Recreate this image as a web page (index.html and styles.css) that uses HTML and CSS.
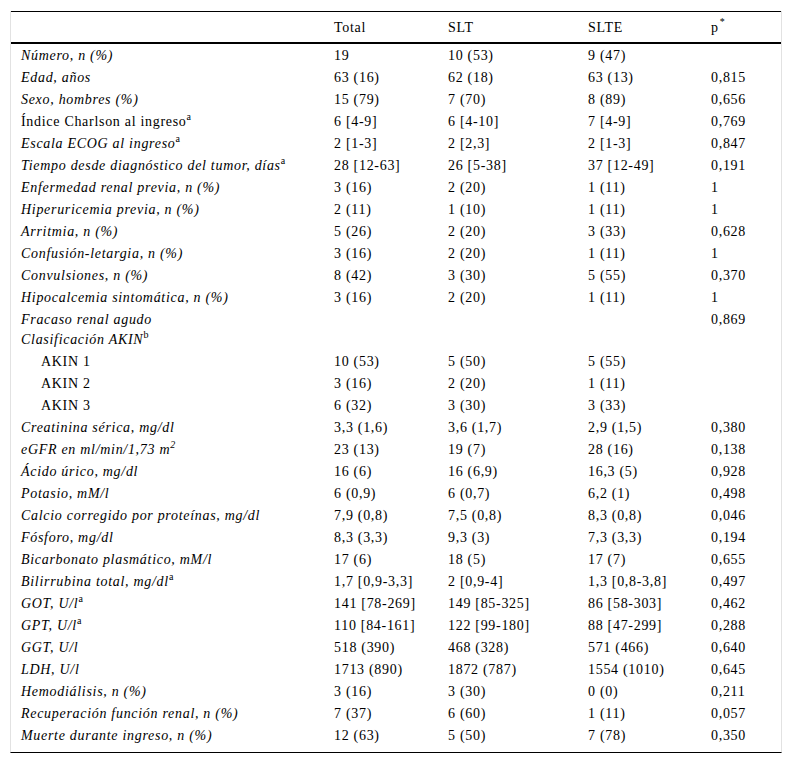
FILE: index.html
```html
<!DOCTYPE html>
<html lang="es">
<head>
<meta charset="utf-8">
<link rel="stylesheet" href="styles.css">
</head>
<body>
<div class="frame">
<table class="data">
<colgroup>
<col class="c1"><col class="c2"><col class="c3"><col class="c4"><col class="c5">
</colgroup>
<thead>
<tr><th></th><th>Total</th><th>SLT</th><th>SLTE</th><th>p<sup class="ast">*</sup></th></tr>
</thead>
<tbody>
<tr><td class="it">Número, n (%)</td><td>19</td><td>10 (53)</td><td>9 (47)</td><td></td></tr>
<tr><td class="it">Edad, años</td><td>63 (16)</td><td>62 (18)</td><td>63 (13)</td><td>0,815</td></tr>
<tr><td class="it">Sexo, hombres (%)</td><td>15 (79)</td><td>7 (70)</td><td>8 (89)</td><td>0,656</td></tr>
<tr><td>Índice Charlson al ingreso<sup>a</sup></td><td>6 [4-9]</td><td>6 [4-10]</td><td>7 [4-9]</td><td>0,769</td></tr>
<tr><td class="it">Escala ECOG al ingreso<sup>a</sup></td><td>2 [1-3]</td><td>2 [2,3]</td><td>2 [1-3]</td><td>0,847</td></tr>
<tr><td class="it">Tiempo desde diagnóstico del tumor, días<sup>a</sup></td><td>28 [12-63]</td><td>26 [5-38]</td><td>37 [12-49]</td><td>0,191</td></tr>
<tr><td class="it">Enfermedad renal previa, n (%)</td><td>3 (16)</td><td>2 (20)</td><td>1 (11)</td><td>1</td></tr>
<tr><td class="it">Hiperuricemia previa, n (%)</td><td>2 (11)</td><td>1 (10)</td><td>1 (11)</td><td>1</td></tr>
<tr><td class="it">Arritmia, n (%)</td><td>5 (26)</td><td>2 (20)</td><td>3 (33)</td><td>0,628</td></tr>
<tr><td class="it">Confusión-letargia, n (%)</td><td>3 (16)</td><td>2 (20)</td><td>1 (11)</td><td>1</td></tr>
<tr><td class="it">Convulsiones, n (%)</td><td>8 (42)</td><td>3 (30)</td><td>5 (55)</td><td>0,370</td></tr>
<tr><td class="it">Hipocalcemia sintomática, n (%)</td><td>3 (16)</td><td>2 (20)</td><td>1 (11)</td><td>1</td></tr>
<tr class="top"><td class="it">Fracaso renal agudo<br>Clasificación AKIN<sup>b</sup></td><td></td><td></td><td></td><td>0,869</td></tr>
<tr><td class="sub">AKIN 1</td><td>10 (53)</td><td>5 (50)</td><td>5 (55)</td><td></td></tr>
<tr><td class="sub">AKIN 2</td><td>3 (16)</td><td>2 (20)</td><td>1 (11)</td><td></td></tr>
<tr><td class="sub">AKIN 3</td><td>6 (32)</td><td>3 (30)</td><td>3 (33)</td><td></td></tr>
<tr><td class="it">Creatinina sérica, mg/dl</td><td>3,3 (1,6)</td><td>3,6 (1,7)</td><td>2,9 (1,5)</td><td>0,380</td></tr>
<tr><td class="it">eGFR en ml/min/1,73 m<sup class="sq">2</sup></td><td>23 (13)</td><td>19 (7)</td><td>28 (16)</td><td>0,138</td></tr>
<tr><td class="it">Ácido úrico, mg/dl</td><td>16 (6)</td><td>16 (6,9)</td><td>16,3 (5)</td><td>0,928</td></tr>
<tr><td class="it">Potasio, mM/l</td><td>6 (0,9)</td><td>6 (0,7)</td><td>6,2 (1)</td><td>0,498</td></tr>
<tr><td class="it">Calcio corregido por proteínas, mg/dl</td><td>7,9 (0,8)</td><td>7,5 (0,8)</td><td>8,3 (0,8)</td><td>0,046</td></tr>
<tr><td class="it">Fósforo, mg/dl</td><td>8,3 (3,3)</td><td>9,3 (3)</td><td>7,3 (3,3)</td><td>0,194</td></tr>
<tr><td class="it">Bicarbonato plasmático, mM/l</td><td>17 (6)</td><td>18 (5)</td><td>17 (7)</td><td>0,655</td></tr>
<tr><td class="it">Bilirrubina total, mg/dl<sup>a</sup></td><td>1,7 [0,9-3,3]</td><td>2 [0,9-4]</td><td>1,3 [0,8-3,8]</td><td>0,497</td></tr>
<tr><td class="it">GOT, U/l<sup>a</sup></td><td>141 [78-269]</td><td>149 [85-325]</td><td>86 [58-303]</td><td>0,462</td></tr>
<tr><td class="it">GPT, U/l<sup>a</sup></td><td>110 [84-161]</td><td>122 [99-180]</td><td>88 [47-299]</td><td>0,288</td></tr>
<tr><td class="it">GGT, U/l</td><td>518 (390)</td><td>468 (328)</td><td>571 (466)</td><td>0,640</td></tr>
<tr><td class="it">LDH, U/l</td><td>1713 (890)</td><td>1872 (787)</td><td>1554 (1010)</td><td>0,645</td></tr>
<tr><td class="it">Hemodiálisis, n (%)</td><td>3 (16)</td><td>3 (30)</td><td>0 (0)</td><td>0,211</td></tr>
<tr><td class="it">Recuperación función renal, n (%)</td><td>7 (37)</td><td>6 (60)</td><td>1 (11)</td><td>0,057</td></tr>
<tr class="last"><td class="it">Muerte durante ingreso, n (%)</td><td>12 (63)</td><td>5 (50)</td><td>7 (78)</td><td>0,350</td></tr>
</tbody>
</table>
</div>
</body>
</html>
```

FILE: styles.css
```css
html, body {
  margin: 0;
  padding: 0;
  background: #ffffff;
}
body {
  padding: 11px 0 0 10px;
  font-family: "Liberation Serif", "Times New Roman", serif;
  font-size: 14px;
  color: #000;
}
.frame {
  width: 770px;
  border-left: 1px solid #e2e2e2;
  border-right: 1px solid #e2e2e2;
  border-bottom: 1px solid #000;
}
.data {
  width: 100%;
  border-collapse: collapse;
  table-layout: fixed;
  letter-spacing: 0.7px;
}
.c1 { width: 313px; }
.c2 { width: 114px; }
.c3 { width: 140px; }
.c4 { width: 123px; }
.c5 { width: 80px; }
.data thead tr {
  border-top: 1px solid #000;
  border-bottom: 2px solid #000;
}
.data th {
  font-weight: normal;
  text-align: left;
  padding: 6px 0 4px 10px;
  line-height: 20px;
}
.data td {
  padding: 2px 0 0 10px;
  line-height: 20px;
  vertical-align: middle;
  white-space: nowrap;
}
.data tr.top td { vertical-align: top; }
.data tr.last td { padding-bottom: 6px; }
.it { font-style: italic; }
.sub { padding-left: 30px !important; }
sup {
  font-size: 10px;
  line-height: 0;
  vertical-align: 6px;
  font-style: normal;
  letter-spacing: 0;
}
sup.sq { font-style: italic; font-size: 10px; }
sup.ast { vertical-align: 7px; font-size: 10px; padding-left: 1px; }
```
